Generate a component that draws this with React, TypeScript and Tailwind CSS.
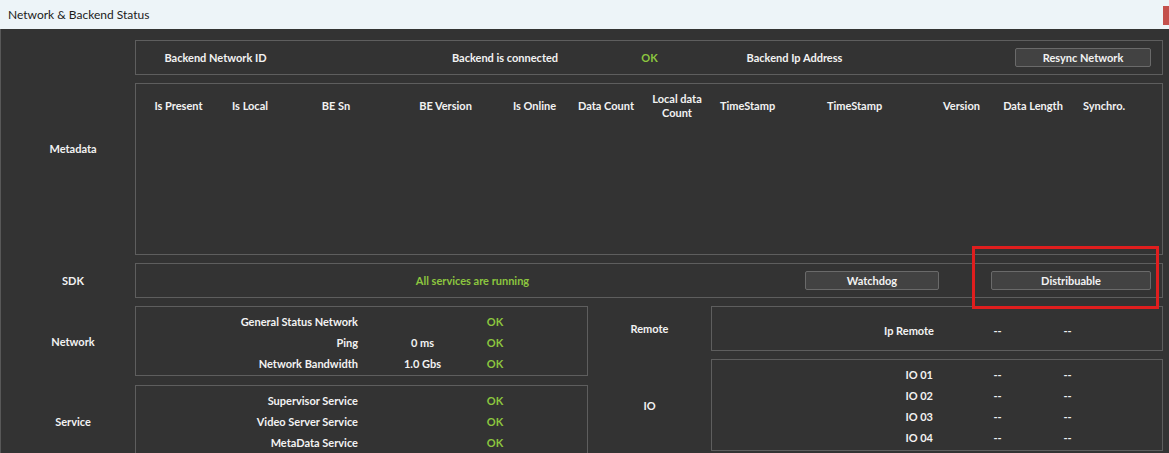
const OK = "text-[#8cc63f]";

const metaHeaders = [
  { w: "w-[71px]", t: "Is Present" },
  { w: "w-[72px]", t: "Is Local" },
  { w: "w-[100px]", t: "BE Sn" },
  { w: "w-[119px]", t: "BE Version" },
  { w: "w-[59px]", t: "Is Online" },
  { w: "w-[84px]", t: "Data Count" },
  { w: "w-[58px]", t: "Local data Count" },
  { w: "w-[83px]", t: "TimeStamp" },
  { w: "w-[131px]", t: "TimeStamp" },
  { w: "w-[83px]", t: "Version" },
  { w: "w-[60px]", t: "Data Length" },
  { w: "w-[82px]", t: "Synchro." },
];

const networkRows = [
  { label: "General Status Network", value: "" },
  { label: "Ping", value: "0 ms" },
  { label: "Network Bandwidth", value: "1.0 Gbs" },
];

const serviceRows = ["Supervisor Service", "Video Server Service", "MetaData Service"];
const ioRows = ["IO 01", "IO 02", "IO 03", "IO 04"];

function Label({ children, wide, top }: { children: React.ReactNode; wide?: boolean; top?: string }) {
  return (
    <div
      className={`${wide ? "w-[123px]" : "w-[134px] pl-[10px]"} ${top ?? "items-center"} shrink-0 flex justify-center`}
    >
      {children}
    </div>
  );
}

function Btn({ w, children }: { w: string; children: React.ReactNode }) {
  return (
    <div
      className={`${w} h-[19px] shrink-0 flex items-center justify-center bg-[#424242] border border-[#6a6a6a] rounded-[2px]`}
    >
      {children}
    </div>
  );
}

export default function App() {
  return (
    <div className="relative w-[1169px] h-[453px] overflow-hidden bg-[#333333] font-['Lato',sans-serif] text-[11px] font-bold text-[#f2f2f2] leading-none">
      {/* title bar */}
      <div className="h-[29px] bg-[#edf4f8] flex items-center pl-[8px] relative">
        <span className="text-[12px] font-normal text-[#1b1b1b]">Network &amp; Backend Status</span>
        <div className="absolute right-0 top-[6px] w-[6px] h-[19px] bg-[#c4504c]" />
      </div>

      <div className="border-l border-[#585858] h-[424px] pt-[11px] flex flex-col gap-[8px]">
        {/* backend row */}
        <div className="flex">
          <Label>{""}</Label>
          <div className="w-[1028px] h-[35px] border border-[#5e5e5e] flex items-center">
            <div className="w-[159px] flex justify-center whitespace-nowrap">Backend Network ID</div>
            <div className="ml-[140px] w-[140px] flex justify-center whitespace-nowrap">Backend is connected</div>
            <div className={`ml-[50px] w-[49px] flex justify-center ${OK}`}>OK</div>
            <div className="ml-[60px] w-[121px] flex justify-center whitespace-nowrap">Backend Ip Address</div>
            <div className="ml-[160px]">
              <Btn w="w-[136px]">Resync Network</Btn>
            </div>
          </div>
        </div>

        {/* metadata */}
        <div className="flex">
          <Label top="items-start pt-[60px]">Metadata</Label>
          <div className="w-[1028px] h-[172px] border border-[#5e5e5e]">
            <div className="flex pl-[7px] pt-[8px] h-[36px] items-center">
              {metaHeaders.map((h, i) => (
                <div key={i} className={`${h.w} shrink-0 flex justify-center text-center leading-[14px]`}>
                  {h.t === "Local data Count" ? (
                    <span className="whitespace-nowrap">
                      Local data
                      <br />
                      Count
                    </span>
                  ) : (
                    <span className="whitespace-nowrap">{h.t}</span>
                  )}
                </div>
              ))}
            </div>
          </div>
        </div>

        {/* sdk */}
        <div className="flex">
          <Label>SDK</Label>
          <div className="w-[1028px] h-[35px] border border-[#5e5e5e] flex items-center">
            <div className={`ml-[200px] w-[273px] flex justify-center whitespace-nowrap ${OK}`}>
              All services are running
            </div>
            <div className="ml-[196px]">
              <Btn w="w-[134px]">Watchdog</Btn>
            </div>
            <div className="ml-[52px]">
              <Btn w="w-[160px]">Distribuable</Btn>
            </div>
          </div>
        </div>

        {/* bottom */}
        <div className="flex items-start">
          <div className="flex flex-col gap-[9px]">
            <div className="flex">
              <Label>Network</Label>
              <div className="w-[453px] h-[70px] border border-[#5e5e5e] pt-[4px]">
                {networkRows.map((r) => (
                  <div key={r.label} className="h-[21px] flex items-center">
                    <div className="w-[222px] text-right whitespace-nowrap">{r.label}</div>
                    <div className="ml-[32px] w-[65px] flex justify-center whitespace-nowrap">{r.value}</div>
                    <div className={`ml-[20px] w-[40px] flex justify-center ${OK}`}>OK</div>
                  </div>
                ))}
              </div>
            </div>
            <div className="flex">
              <Label>Service</Label>
              <div className="w-[453px] h-[72px] border border-[#5e5e5e] pt-[4px]">
                {serviceRows.map((r) => (
                  <div key={r} className="h-[21px] flex items-center">
                    <div className="w-[222px] text-right whitespace-nowrap">{r}</div>
                    <div className="ml-[32px] w-[65px]" />
                    <div className={`ml-[20px] w-[40px] flex justify-center ${OK}`}>OK</div>
                  </div>
                ))}
              </div>
            </div>
          </div>

          <div className="flex flex-col gap-[8px]">
            <div className="flex">
              <Label wide>Remote</Label>
              <div className="w-[452px] h-[45px] border border-[#5e5e5e] flex items-center pt-[4px]">
                <div className="w-[222px] text-right whitespace-nowrap">Ip Remote</div>
                <div className="ml-[40px] w-[47px] flex justify-center">--</div>
                <div className="ml-[23px] w-[47px] flex justify-center">--</div>
              </div>
            </div>
            <div className="flex">
              <Label wide>IO</Label>
              <div className="w-[452px] h-[92px] border border-[#5e5e5e] pt-[4px]">
                {ioRows.map((r) => (
                  <div key={r} className="h-[21px] flex items-center">
                    <div className="w-[221px] text-right whitespace-nowrap">{r}</div>
                    <div className="ml-[41px] w-[47px] flex justify-center">--</div>
                    <div className="ml-[23px] w-[47px] flex justify-center">--</div>
                  </div>
                ))}
              </div>
            </div>
          </div>
        </div>
      </div>

      {/* annotation */}
      <div className="absolute left-[972px] top-[246px] w-[187px] h-[63px] border-[3px] border-[#e01e1e]" />
    </div>
  );
}
